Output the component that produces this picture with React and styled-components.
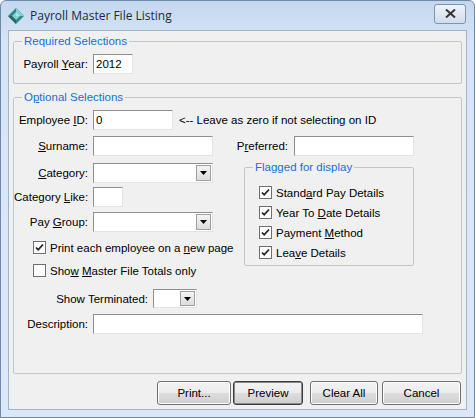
import React from "react";
import styled, { createGlobalStyle } from "styled-components";

const Global = createGlobalStyle`
  html, body { margin: 0; padding: 0; }
  body { font-family: "Liberation Sans", Arial, sans-serif; font-size: 11.5px; color: #000; }
`;

const Win = styled.div`
  width: 475px; height: 418px; box-sizing: border-box;
  background: linear-gradient(#c4d7ee, #d6e5f7 40px, #dbe8f8);
  border: 1px solid #6f8aa8; border-radius: 6px 6px 0 0;
  display: flex; flex-direction: column;
`;
const TitleBar = styled.div`
  height: 29px; display: flex; align-items: center; padding: 0 8px 0 7px; gap: 6px;
`;
const Title = styled.div`
  flex: 1; font-family: "Open Sans", "Noto Sans", sans-serif; font-size: 12px; color: #1b2a3c;
`;
const CloseBtn = styled.div`
  width: 30px; height: 18px; border: 1px solid #7f93ad; border-radius: 3px; margin-top: -4px;
  background: linear-gradient(#eef3f9, #d2ddea); display: flex; align-items: center; justify-content: center;
`;
const Client = styled.div`
  margin: 0 7px 7px 7px; flex: 1; background: #f0f0f0; border: 1px solid #9fb3cb;
  padding: 0 4px; display: flex; flex-direction: column;
`;
const Group = styled.div`
  position: relative; border: 1px solid #c5c5c5; border-radius: 2px;
  margin-top: ${p => p.$mt}px; height: ${p => p.$h}px; box-sizing: border-box;
  width: ${p => p.$w ? p.$w + "px" : "auto"}; margin-left: ${p => p.$ml || 0}px;
`;
const Legend = styled.span`
  position: absolute; top: -8px; left: ${p => p.$l}px; padding: 0 2px; background: #f0f0f0;
  color: #1a6ed8; font-size: 11.5px; line-height: 14px;
`;
const Row = styled.div`
  display: flex; align-items: center; margin-top: ${p => p.$mt || 0}px; gap: ${p => p.$gap ?? 5}px;
`;
const Label = styled.span`
  width: ${p => p.$w}px; text-align: right; white-space: nowrap; flex-shrink: 0;
`;
const Input = styled.div`
  width: ${p => p.$w}px; height: 20px; box-sizing: border-box; background: #fff;
  border: 1px solid; border-color: #8e8f8f #e3e3e3 #e3e3e3 #8e8f8f;
  padding-left: 2px; display: flex; align-items: center; font-size: 11.5px;
`;
const Combo = styled.div`
  width: ${p => p.$w}px; height: ${p => p.$h || 20}px; box-sizing: border-box; background: #fff;
  border: 1px solid; border-color: #8e8f8f #e3e3e3 #e3e3e3 #8e8f8f;
  display: flex; justify-content: flex-end; padding: 1px;
`;
const ComboBtn = styled.div`
  width: 15px; box-sizing: border-box; border: 1px solid #a0a0a0;
  background: linear-gradient(#f4f4f4, #dcdcdc); display: flex; align-items: center; justify-content: center;
`;
const Cols = styled.div` display: flex; margin-top: 6px; `;
const LeftCol = styled.div` width: 217px; display: flex; flex-direction: column; `;
const RightCol = styled.div` display: flex; flex-direction: column; `;
const Check = styled.div`
  display: flex; align-items: center; gap: 4px; height: 13px; white-space: nowrap;
  margin-top: ${p => p.$mt || 0}px; margin-left: ${p => p.$ml || 0}px;
`;
const Box = styled.span`
  width: 13px; height: 13px; box-sizing: border-box; border: 1px solid #707070; background: #fff;
  display: inline-flex; align-items: center; justify-content: center; flex-shrink: 0;
`;
const Note = styled.span` margin-left: 1px; white-space: nowrap; `;
const Buttons = styled.div`
  display: flex; justify-content: flex-end; margin-top: 7px; padding-right: 1px;
`;
const Btn = styled.div`
  width: ${p => p.$w}px; height: 24px; box-sizing: border-box; border-radius: 3px;
  border: 1px solid ${p => p.$def ? "#3c3c3c" : "#707070"};
  box-shadow: ${p => p.$def ? "inset 0 0 0 1px #8a8a8a" : "inset 0 0 0 1px #fcfcfc"};
  background: linear-gradient(#f3f3f3, #ebebeb 50%, #dddddd 51%, #cfcfcf);
  display: flex; align-items: center; justify-content: center; margin-left: ${p => p.$ml || 0}px;
`;

const U = ({ children }) => <u>{children}</u>;

const Arrow = () => (
  <svg width="7" height="4" viewBox="0 0 7 4"><path d="M0 0h7L3.5 4z" fill="#000" /></svg>
);
const CBox = ({ on }) => (
  <Box>
    {on && <svg width="9" height="9" viewBox="0 0 9 9"><path d="M1 4.5l2.2 2.3L8 1.5" stroke="#222" strokeWidth="1.8" fill="none" /></svg>}
  </Box>
);
const ComboBox = ({ w, h }) => (
  <Combo $w={w} $h={h}><ComboBtn><Arrow /></ComboBtn></Combo>
);

export default function App() {
  return (
    <>
      <Global />
      <Win>
        <TitleBar>
          <svg width="16" height="16" viewBox="0 0 16 16">
            <path d="M8 0L16 8L8 16L0 8Z" fill="#2a8a8a" />
            <path d="M8 0L16 8L8 8Z" fill="#7fd0d0" />
            <path d="M0 8L8 8L8 16Z" fill="#1d6a6a" />
            <path d="M4 8L8 4L12 8L8 12Z" fill="#bfeeee" opacity="0.7" />
          </svg>
          <Title>Payroll Master File Listing</Title>
          <CloseBtn>
            <svg width="11" height="9" viewBox="0 0 11 9"><path d="M1 0.5L10 8.5M10 0.5L1 8.5" stroke="#333" strokeWidth="2" /></svg>
          </CloseBtn>
        </TitleBar>
        <Client>
          <Group $mt={10} $h={43}>
            <Legend $l={8}>Required Selections</Legend>
            <Row $mt={12}>
              <Label $w={74}>Payroll <U>Y</U>ear:</Label>
              <Input $w={40}>2012</Input>
            </Row>
          </Group>
          <Group $mt={13} $h={277}>
            <Legend $l={8}>O<U>p</U>tional Selections</Legend>
            <Row $mt={12}>
              <Label $w={74}>Employee <U>I</U>D:</Label>
              <Input $w={80}>0</Input>
              <Note>&lt;-- Leave as zero if not selecting on ID</Note>
            </Row>
            <Cols>
              <LeftCol>
                <Row>
                  <Label $w={74}><U>S</U>urname:</Label>
                  <Input $w={120} />
                </Row>
                <Row $mt={7}>
                  <Label $w={74}><U>C</U>ategory:</Label>
                  <ComboBox w={120} />
                </Row>
                <Row $mt={4}>
                  <Label $w={74}>Category <U>L</U>ike:</Label>
                  <Input $w={30} />
                </Row>
                <Row $mt={5}>
                  <Label $w={74}>Pay <U>G</U>roup:</Label>
                  <ComboBox w={120} />
                </Row>
                <Check $mt={9} $ml={19}><CBox on /><span>Print each employee on a <U>n</U>ew page</span></Check>
                <Check $mt={10} $ml={19}><CBox /><span>Sho<U>w</U> <U>M</U>aster File Totals only</span></Check>
              </LeftCol>
              <RightCol>
                <Row $gap={6}>
                  <Label $w={57}>P<U>r</U>eferred:</Label>
                  <Input $w={120} />
                </Row>
                <Group $mt={11} $h={99} $w={170} $ml={13}>
                  <Legend $l={8}>Flagged for display</Legend>
                  <Check $mt={18} $ml={14}><CBox on /><span>Stand<U>a</U>rd Pay Details</span></Check>
                  <Check $mt={7} $ml={14}><CBox on /><span>Year To <U>D</U>ate Details</span></Check>
                  <Check $mt={7} $ml={14}><CBox on /><span>Payment <U>M</U>ethod</span></Check>
                  <Check $mt={7} $ml={14}><CBox on /><span>Lea<U>v</U>e Details</span></Check>
                </Group>
              </RightCol>
            </Cols>
            <Row $mt={12}>
              <Label $w={134}>Show Terminated:</Label>
              <ComboBox w={44} h={19} />
            </Row>
            <Row $mt={6}>
              <Label $w={74}>Description:</Label>
              <Input $w={330} />
            </Row>
          </Group>
          <Buttons>
            <Btn $w={74}>Print...</Btn>
            <Btn $w={70} $def $ml={2}>Preview</Btn>
            <Btn $w={68} $ml={7}>Clear All</Btn>
            <Btn $w={79} $ml={4}>Cancel</Btn>
          </Buttons>
        </Client>
      </Win>
    </>
  );
}
